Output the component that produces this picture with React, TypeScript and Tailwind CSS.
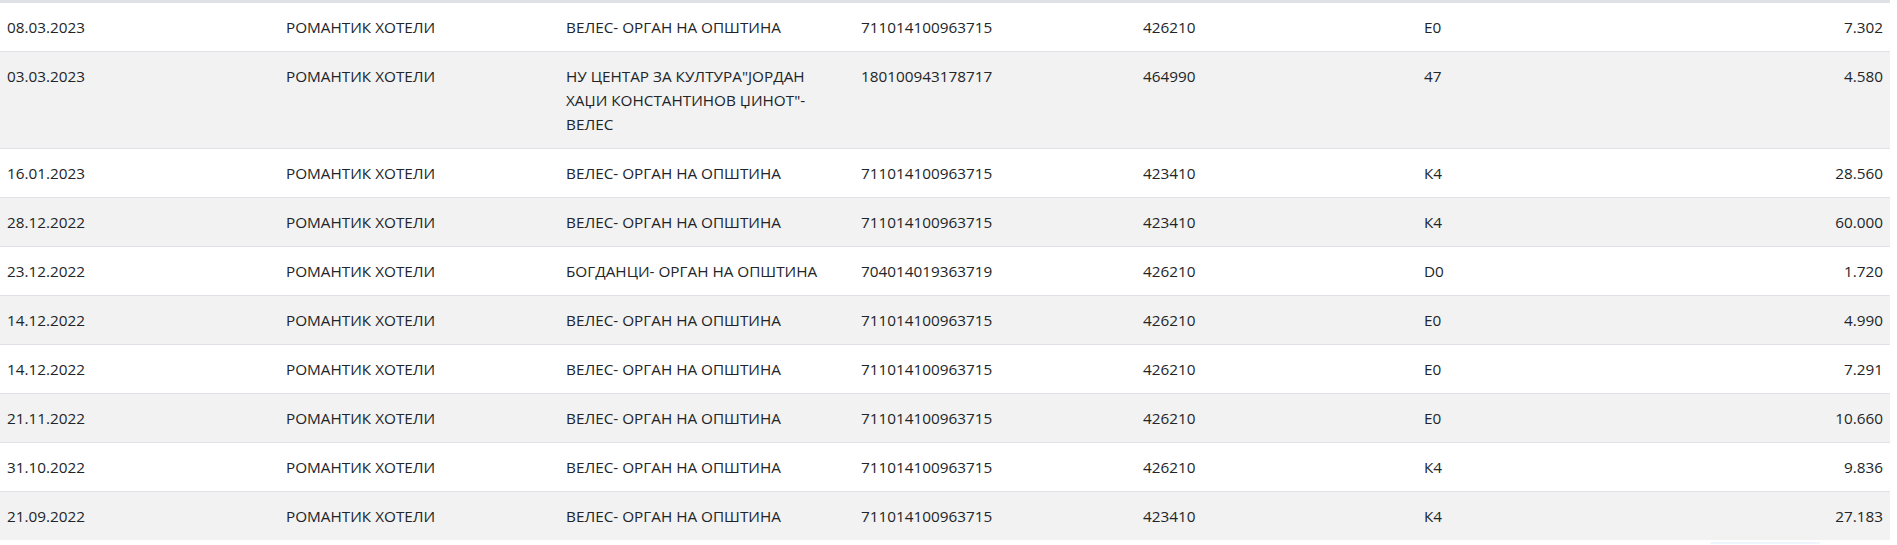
import React from "react";

type Row = {
  date: string;
  company: string;
  institution: string[];
  account: string;
  code: string;
  program: string;
  amount: string;
};

const VELES = ["ВЕЛЕС- ОРГАН НА ОПШТИНА"];

const rows: Row[] = [
  { date: "08.03.2023", company: "РОМАНТИК ХОТЕЛИ", institution: VELES, account: "711014100963715", code: "426210", program: "Е0", amount: "7.302" },
  {
    date: "03.03.2023",
    company: "РОМАНТИК ХОТЕЛИ",
    institution: ["НУ ЦЕНТАР ЗА КУЛТУРА\"ЈОРДАН", "ХАЏИ КОНСТАНТИНОВ ЏИНОТ\"-", "ВЕЛЕС"],
    account: "180100943178717",
    code: "464990",
    program: "47",
    amount: "4.580",
  },
  { date: "16.01.2023", company: "РОМАНТИК ХОТЕЛИ", institution: VELES, account: "711014100963715", code: "423410", program: "К4", amount: "28.560" },
  { date: "28.12.2022", company: "РОМАНТИК ХОТЕЛИ", institution: VELES, account: "711014100963715", code: "423410", program: "К4", amount: "60.000" },
  { date: "23.12.2022", company: "РОМАНТИК ХОТЕЛИ", institution: ["БОГДАНЦИ- ОРГАН НА ОПШТИНА"], account: "704014019363719", code: "426210", program: "D0", amount: "1.720" },
  { date: "14.12.2022", company: "РОМАНТИК ХОТЕЛИ", institution: VELES, account: "711014100963715", code: "426210", program: "Е0", amount: "4.990" },
  { date: "14.12.2022", company: "РОМАНТИК ХОТЕЛИ", institution: VELES, account: "711014100963715", code: "426210", program: "Е0", amount: "7.291" },
  { date: "21.11.2022", company: "РОМАНТИК ХОТЕЛИ", institution: VELES, account: "711014100963715", code: "426210", program: "Е0", amount: "10.660" },
  { date: "31.10.2022", company: "РОМАНТИК ХОТЕЛИ", institution: VELES, account: "711014100963715", code: "426210", program: "К4", amount: "9.836" },
  { date: "21.09.2022", company: "РОМАНТИК ХОТЕЛИ", institution: VELES, account: "711014100963715", code: "423410", program: "К4", amount: "27.183" },
];

const App = () => {
  return (
    <div
      className="w-[1897px] bg-white text-[15.3px] leading-[24px] text-[#212529]"
      style={{ fontFamily: '"Open Sans", "Noto Sans", sans-serif' }}
    >
      <table className="w-[1890px] table-fixed border-collapse border-t-[3px] border-[#dee2e6]">
        <colgroup>
          <col className="w-[279px]" />
          <col className="w-[280px]" />
          <col className="w-[295px]" />
          <col className="w-[282px]" />
          <col className="w-[281px]" />
          <col />
        </colgroup>
        <tbody>
          {rows.map((row, i) => (
            <tr
              key={i}
              className={
                (i === 0 ? "" : "border-t border-[#dee2e6] ") +
                (i % 2 === 1 ? "bg-[#f2f2f2]" : "bg-white")
              }
            >
              <td className="px-[7px] py-3 align-top">{row.date}</td>
              <td className="px-[7px] py-3 align-top">{row.company}</td>
              <td className="px-[7px] py-3 align-top">
                {row.institution.map((line, j) => (
                  <div key={j}>{line}</div>
                ))}
              </td>
              <td className="px-[7px] py-3 align-top">{row.account}</td>
              <td className="px-[7px] py-3 align-top">{row.code}</td>
              <td className="px-[7px] py-3 align-top">
                <div className="flex justify-between">
                  <span>{row.program}</span>
                  <span>{row.amount}</span>
                </div>
              </td>
            </tr>
          ))}
        </tbody>
      </table>
      <div className="flex justify-end pr-[77px] pt-[2px]">
        <div className="h-[2px] w-[110px] rounded-t bg-[#eef5fe]" />
      </div>
    </div>
  );
};

export default App;
